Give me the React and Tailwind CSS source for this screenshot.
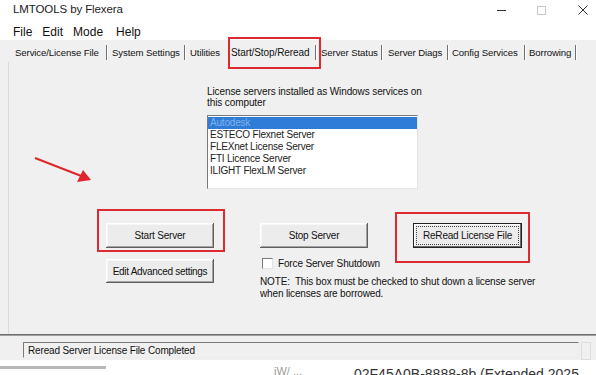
import React from "react";

const F = "font-['Liberation_Sans',Arial,sans-serif]";

function Btn({ children, className = "" }) {
  return (
    <div
      className={`flex items-center justify-center whitespace-nowrap bg-[#ececec] text-[10px] tracking-[-0.2px] text-[#111] shadow-[inset_-1px_-1px_0_#5f5f5f,inset_1px_1px_0_#ffffff,inset_-2px_-2px_0_#a3a3a3,inset_2px_2px_0_#f7f7f7] ${className}`}
    >
      {children}
    </div>
  );
}

function Sep() {
  return <div className="mt-[5px] h-[15px] w-px shrink-0 bg-[#707070] shadow-[1px_0_0_#fff]" />;
}

function Tab({ label, w, pl, sep = true }) {
  return (
    <div className={`flex shrink-0 items-start justify-between ${w} ${pl}`}>
      <div className="mt-[6px] whitespace-nowrap">{label}</div>
      {sep && <Sep />}
    </div>
  );
}

export default function App() {
  return (
    <div className={`${F} flex h-[375px] w-[596px] flex-col overflow-hidden bg-[#f0f0f0] text-[#111]`}>
      {/* title bar */}
      <div className="flex h-[20px] items-center bg-white pl-[13px]">
        <div className="text-[11.5px] leading-none tracking-[-0.1px] text-[#222]">LMTOOLS by Flexera</div>
        <div className="ml-auto flex items-center">
          <div className="mr-[31px] h-px w-[9px] bg-[#333]" />
          <div className="mr-[32px] h-[9px] w-[9px] border border-[#c8c8c8]" />
          <svg width="10" height="10" viewBox="0 0 10 10" className="mr-[8px]">
            <path d="M0.5 0.5 L9.5 9.5 M9.5 0.5 L0.5 9.5" stroke="#333" strokeWidth="1" />
          </svg>
        </div>
      </div>
      {/* menu bar */}
      <div className="flex h-[20px] items-center gap-[10px] bg-white pl-[13px] pt-[4px] text-[12px] leading-none text-[#111]">
        <span>File</span>
        <span>Edit</span>
        <span>Mode</span>
        <span className="ml-[3px]">Help</span>
      </div>
      {/* tab strip */}
      <div className="relative flex h-[22px] items-start pl-[15px] text-[9.6px] tracking-[-0.1px]">
        <Tab label="Service/License File" w="w-[92px]" pl="pl-0" />
        <Tab label="System Settings" w="w-[78px]" pl="pl-[5px]" />
        <Tab label="Utilities" w="w-[43px]" pl="pl-[5px]" sep={false} />
        <div className="relative -mt-[3px] flex h-[32px] w-[93px] shrink-0 items-start justify-between border-2 border-[#dc2a30] pl-[1px] pr-[3px]">
          <div className="mt-[6px] whitespace-nowrap text-[10px]">Start/Stop/Reread</div>
          <div className="mt-[1px]"><Sep /></div>
        </div>
        <Tab label="Server Status" w="w-[61px]" pl="pl-0" />
        <Tab label="Server Diags" w="w-[66px]" pl="pl-[6px]" />
        <Tab label="Config Services" w="w-[77px]" pl="pl-[4px]" />
        <Tab label="Borrowing" w="w-[51px]" pl="pl-[4px]" />
      </div>
      {/* panel */}
      <div className="relative ml-[8px] flex h-[272px] flex-col border-l border-[#dadada] pt-[24px]">
        {/* red arrow annotation */}
        <svg className="absolute left-[25px] top-[93px]" width="70" height="40" viewBox="0 0 70 40">
          <line x1="1" y1="3" x2="55" y2="24" stroke="#e0252b" strokeWidth="2" />
          <path d="M57 25 L43 27 L49 15 Z" fill="#e0252b" />
        </svg>
        {/* list section */}
        <div className="ml-[198px] w-[232px] text-[10px] leading-[11px] tracking-[-0.1px]">
          License servers installed as Windows services on this computer
        </div>
        <div className="ml-[198px] mt-[7px] h-[74px] w-[211px] border border-b-[#e3e3e3] border-l-[#7a7a7a] border-r-[#e3e3e3] border-t-[#7a7a7a] bg-white pt-[1px] text-[10px] leading-[12px] tracking-[-0.2px] text-[#222]">
          <div className="bg-[#2f7cd6] pl-[2px] text-[#7fb2ec]">Autodesk</div>
          <div className="pl-[2px]">ESTECO Flexnet Server</div>
          <div className="pl-[2px]">FLEXnet License Server</div>
          <div className="pl-[2px]">FTI Licence Server</div>
          <div className="pl-[2px]">ILIGHT FlexLM Server</div>
        </div>
        {/* buttons row */}
        <div className="mt-[20px] flex items-start">
          {/* col A */}
          <div className="ml-[88px] flex flex-col">
            <div className="h-[43px] w-[128px] border-2 border-[#dc2a30] pl-[7px] pt-[12px]">
              <Btn className="h-[25px] w-[108px]">Start Server</Btn>
            </div>
            <Btn className="ml-[9px] mt-[7px] h-[24px] w-[108px] tracking-[-0.3px]">Edit Advanced settings</Btn>
          </div>
          {/* col B */}
          <div className="ml-[35px] mt-[14px] flex w-[108px] flex-col">
            <Btn className="h-[25px] w-[108px]">Stop Server</Btn>
            <div className="mt-[8px] flex items-center whitespace-nowrap">
              <div className="ml-[2px] h-[11px] w-[11px] shrink-0 border border-b-[#e3e3e3] border-l-[#7a7a7a] border-r-[#e3e3e3] border-t-[#7a7a7a] bg-white" />
              <div className="ml-[5px] text-[10px] tracking-[-0.15px]">Force Server Shutdown</div>
            </div>
            <div className="mt-[5px] w-[285px] shrink-0 text-[10px] leading-[11.5px] tracking-[-0.15px]">
              NOTE:&nbsp; This box must be checked to shut down a license server when licenses are borrowed.
            </div>
          </div>
          {/* col C */}
          <div className="ml-[27px] mt-[3px] h-[51px] w-[135px] border-2 border-[#dc2a30] pl-[16px] pt-[9px]">
            <div className="h-[25px] w-[109px] border border-[#222] bg-[#ececec] p-[2px] shadow-[inset_-1px_-1px_0_#6a6a6a,inset_1px_1px_0_#ffffff]">
              <div className="flex h-full w-full items-center justify-center whitespace-nowrap border border-dotted border-[#444] text-[10px] tracking-[-0.2px] text-[#111]">
                ReRead License File
              </div>
            </div>
          </div>
        </div>
      </div>
      {/* status area */}
      <div className="h-[2px] border-t border-[#6f6f6f] border-b-white bg-[#a0a0a0]" />
      <div className="flex h-[24px] items-start pt-[6px]">
        <div className="ml-[23px] flex h-[16px] w-[556px] items-center border border-b-[#ececec] border-l-[#7a7a7a] border-r-[#ececec] border-t-[#7a7a7a] pl-[4px] text-[10px] tracking-[-0.15px]">
          Reread Server License File Completed
        </div>
        <div className="ml-[2px] mt-0 h-[18px] w-[10px] border border-[#dcdcdc]" />
      </div>
      {/* bottom strip (window behind) */}
      <div className="relative h-[15px] overflow-hidden bg-white">
        <div className="absolute left-0 top-[6px] h-[3px] w-[106px] bg-[#b8b8b8]" />
        <div className="absolute left-[274px] top-[6px] text-[11px] leading-none text-[#9a9a9a]">iW/ ...</div>
        <div className="absolute left-[354px] top-[7px] whitespace-nowrap text-[14px] leading-none text-[#333]">
          02F45A0B-8888-8b (Extended 2025
        </div>
      </div>
    </div>
  );
}
